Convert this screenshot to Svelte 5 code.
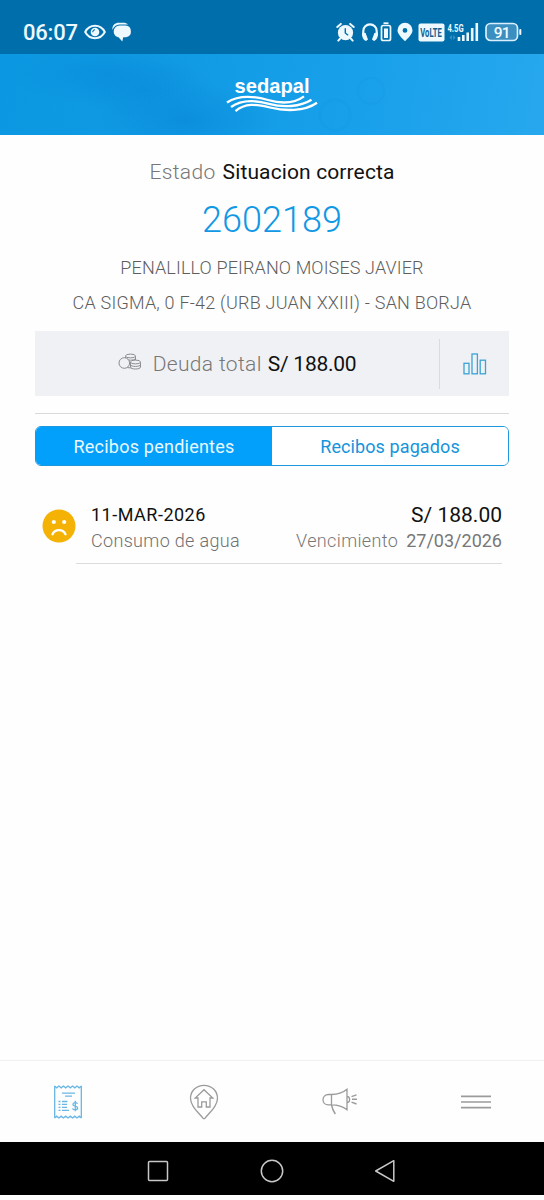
<script lang="ts">
  let tab = $state('pendientes');
</script>

<div class="screen">
  <div class="status">
    <span class="clock">06:07</span>
    <svg class="eye" width="22" height="16" viewBox="0 0 22 16">
      <path d="M1.2 8C5.5-.2 16.5-.2 20.8 8C16.5 16.2 5.500 16.2 1.200 8Z" fill="none" stroke="#eef9ff" stroke-width="2" />
      <circle cx="11" cy="8" r="4.300" fill="#eef9ff" />
      <path d="M8.800 8.300A2.300 2.300 0 0 1 11 5.700" fill="none" stroke="#006eab" stroke-width="1.100" />
    </svg>
    <svg class="bubble" width="20" height="20" viewBox="0 0 20 20">
      <path d="M.4 8C0 3.200 3 .8 7 .8h4c2.300 0 4 .6 5 1.800H7.500C4 2.600 2 4.700.4 8Z" fill="#eef9ff" />
      <path d="M7.500 3.600h6a5.900 5.900 0 0 1 .5 11.700h-2.800L10.300 19.500 6.500 15.300C3.500 15 1.700 12 1.700 9.500A5.900 5.900 0 0 1 7.500 3.600Z" fill="#eef9ff" />
    </svg>
    <span class="grow"></span>
    <svg class="alarm" width="19" height="20" viewBox="0 0 19 20">
      <circle cx="9.500" cy="10.700" r="7.600" fill="#eef9ff" />
      <path d="M1.300 5 4.800 1.900M17.700 5 14.200 1.900M4 16.800 2.300 18.600M15 16.800l1.700 1.800" stroke="#eef9ff" stroke-width="2" stroke-linecap="round" />
      <path d="M9.300 6.300v4.700l2.800 2.300" fill="none" stroke="#006eab" stroke-width="1.400" />
    </svg>
    <svg class="head" width="18" height="20" viewBox="0 0 18 20">
      <path d="M2.300 14V9a6.700 6.700 0 0 1 13.400 0v5" fill="none" stroke="#eef9ff" stroke-width="2.200" />
      <path d="M1 10.500l3.600.5 2.400 6.500-2 1.400C2 18 1 15 1 10.500ZM17 10.500l-3.600.5-2.400 6.500 2 1.400c3-.9 4-3.900 4-8.400Z" fill="#eef9ff" />
    </svg>
    <svg class="cell" width="12" height="20" viewBox="0 0 12 20">
      <rect x="1.500" y="3.500" width="9" height="15" rx="1.800" fill="none" stroke="#eef9ff" stroke-width="1.700" />
      <path d="M3.500 1.200h5" stroke="#eef9ff" stroke-width="1.700" />
      <rect x="4" y="6.500" width="4" height="9.500" fill="#eef9ff" />
    </svg>
    <svg class="pin" width="16" height="20" viewBox="0 0 16 20">
      <path fill-rule="evenodd" d="M8 .7a7.500 7.500 0 0 1 7.500 7.600C15.500 12.300 11 16 8 19.300 5 16 .5 12.300.5 8.300A7.500 7.500 0 0 1 8 .7Zm0 5.300a2.400 2.400 0 1 0 0 4.800 2.400 2.400 0 0 0 0-4.800Z" fill="#eef9ff" />
    </svg>
    <svg class="volte" width="27" height="19" viewBox="0 0 27 19">
      <rect x=".5" y=".5" width="26" height="18" rx="2" fill="#eef9ff" />
      <text transform="translate(2.300 14) scale(.61 1)" font-size="12.500" font-weight="700" fill="#12608d">VoLTE</text>
    </svg>
    <svg class="signal" width="33" height="20" viewBox="0 0 33 20">
      <text transform="translate(.5 9.500) scale(.66 1)" font-size="11.500" font-weight="700" fill="#eef9ff">4.5G</text>
      <path d="M2.500 15.500l2.300-2.500v5zM8.500 15.500l-2.300-2.500v5z" fill="#3a93c4" />
      <path d="M12 19v-4M16.300 19v-6M20.700 19V10.500M25.200 19V6M29.800 19V1" stroke="#eef9ff" stroke-width="2.600" />
    </svg>
    <svg class="batt" width="38" height="20" viewBox="0 0 38 20">
      <rect x="1" y="1.500" width="31.500" height="17" rx="4.500" fill="#3a8fc0" stroke="#d9f0fc" stroke-width="1.700" />
      <rect x="34.300" y="7" width="2" height="6" rx="1" fill="#eef9ff" />
      <text x="8.700" y="15.700" font-size="15.500" letter-spacing="-.8" font-weight="500" fill="#f2fbff">91</text>
    </svg>
  </div>

  <header>
    <svg width="94" height="42" viewBox="0 0 94 42">
      <text x="9.500" y="20.800" textLength="75" lengthAdjust="spacingAndGlyphs" font-family="Liberation Sans, Arial, sans-serif" font-size="20.500" font-weight="700" fill="#fff">sedapal</text>
      <g fill="none" stroke="#fff" stroke-width="2.300">
        <path d="M2 30.500C14 22.500 29 24 43 28S70 31 79 24.300" />
        <path d="M6 35C17 27 30 28 44 31.900S75 35 86.500 27.700" />
        <path d="M10.500 39.200C20 31 31 32 45 35.500S79 40 92 30.800" />
      </g>
    </svg>
  </header>

  <main>
    <div class="state"><span class="light t-estado">Estado</span><span class="t-situacion">Situacion correcta</span></div>
    <div class="number">2602189</div>
    <div class="info name">PENALILLO PEIRANO MOISES JAVIER</div>
    <div class="info addr">CA SIGMA, 0 F-42 (URB JUAN XXIII) - SAN BORJA</div>

    <section class="debt">
      <div class="debt-main">
        <svg width="24" height="18" viewBox="0 0 24 18" fill="#f0f1f5" stroke="#8b8d90" stroke-width="1">
          <path d="M7.500 3.200v10.500c2 1.600 8 1.600 10 0V3.200" />
          <ellipse cx="12.500" cy="3" rx="5" ry="1.900" />
          <path d="M7.500 6c2 1.600 8 1.600 10 0" fill="none" />
          <circle cx="6.300" cy="10" r="5.300" />
          <path d="M12.500 9v5c0 2.700 10 2.700 10 0V9" />
          <ellipse cx="17.500" cy="9" rx="5" ry="1.900" />
          <path d="M12.500 11.500c0 2.600 10 2.600 10 0" fill="none" />
        </svg>
        <span class="light t-deuda">Deuda total</span>
        <span class="t-monto">S/ 188.00</span>
      </div>
      <div class="debt-chart">
        <svg width="24" height="22" viewBox="0 0 24 22" fill="none" stroke="#3ba3d6" stroke-width="1.300">
          <rect x="1" y="10.300" width="5" height="10.500" />
          <rect x="9" y="1" width="5.400" height="19.800" />
          <rect x="17.200" y="7.200" width="5.300" height="13.600" />
        </svg>
      </div>
    </section>

    <div class="rule"></div>

    <div class="tabs">
      <button class:active={tab === 'pendientes'} onclick={() => (tab = 'pendientes')}>Recibos pendientes</button>
      <button class:active={tab === 'pagados'} onclick={() => (tab = 'pagados')}>Recibos pagados</button>
    </div>

    <article class="bill">
      <svg width="34" height="34" viewBox="0 0 34 34">
        <circle cx="17" cy="17" r="16.500" fill="#f3b204" />
        <circle cx="11.800" cy="13" r="2.100" fill="#fff" />
        <circle cx="22.200" cy="13" r="2.100" fill="#fff" />
        <path d="M10.500 25.300C12.700 19.600 21.300 19.600 23.500 25.300" fill="none" stroke="#fff" stroke-width="2.300" stroke-linecap="round" />
      </svg>
      <div class="lines">
        <div class="line"><span class="t-fecha">11-MAR-2026</span><span class="t-total">S/ 188.00</span></div>
        <div class="line sub">
          <span class="t-consumo">Consumo de agua</span>
          <span class="venc"><span class="light t-venc">Vencimiento</span><span class="t-vfecha">27/03/2026</span></span>
        </div>
      </div>
    </article>
    <div class="bill-rule"></div>
  </main>

  <nav class="bottom">
    <div>
      <svg width="30" height="36" viewBox="0 0 30 36" fill="none" stroke="#68b7e4" stroke-width="1.300">
        <path d="M1.700 2v32M28.300 2v32" />
        <path d="M1.500 2l2.200 1.800L5.900 2l2.300 1.800L10.400 2l2.300 1.800L15 2l2.300 1.800L19.500 2l2.300 1.800L24 2l2.200 1.800L28.500 2M1.500 34l2.200-1.800L5.900 34l2.300-1.800L10.400 34l2.300-1.800L15 34l2.300-1.800L19.500 34l2.300-1.800L24 34l2.200-1.800L28.500 34" />
        <path d="M9 9.200h13M12 12.200h7M5.500 17.500h2M9 17.500h5.500M5.500 20.300h2M9 20.300h5M5.500 23.300h2M9 23.300h5M5.500 26.300h2M9 26.300h7" />
        <path d="M24.500 19.700c-.6-1.600-4.600-1.600-4.600.7 0 2.400 4.800 1.200 4.800 3.700 0 2.300-4.600 2.300-5.200.3M22.300 16.800v10.400" />
      </svg>
    </div>
    <div>
      <svg width="30" height="36" viewBox="0 0 30 36" fill="none" stroke="#9b9b9b" stroke-width="1.300">
        <path d="M15 1.300C7.400 1.300 1.500 7 1.500 14.300 1.500 21.500 8 27 14 34.200q1 1 2 0C22 27 28.500 21.500 28.500 14.300 28.500 7 22.600 1.300 15 1.300Z" />
        <path d="M9 23V14H6.200L15 5.700 23.800 14H21v9h-3.700v-5.200h-4.600V23Z" />
      </svg>
    </div>
    <div>
      <svg width="38" height="30" viewBox="0 0 38 30" fill="none" stroke="#9b9b9b" stroke-width="1.300">
        <path d="M10.500 7.500H7.500C.2 7.500.2 17.800 7.500 17.800h3ZM10.500 7.500C16 7.500 21 6.500 26 2.300V22.700C21 18.700 16 17.800 10.500 17.800M26 9.300c3.500 0 3.500 6.300 0 6.300" />
        <path d="M10.500 17.800Q11.500 23 14.300 27M30.500 9.600l5-1.700M31 12.300h5M30.500 15.100l5 1.900" stroke-width="1.500" />
      </svg>
    </div>
    <div>
      <svg width="30" height="16" viewBox="0 0 30 16" stroke="#9b9b9b" stroke-width="1.700">
        <path d="M0 2.300h30M0 8h30M0 13.700h30" />
      </svg>
    </div>
  </nav>

  <div class="system">
    <svg width="22" height="22" viewBox="0 0 22 22"><rect x="1.500" y="1.500" width="19" height="19" rx="1" /></svg>
    <svg width="24" height="24" viewBox="0 0 24 24"><circle cx="12" cy="12" r="10.700" /></svg>
    <svg width="22" height="24" viewBox="0 0 22 24"><path d="M19.800 1.700v20.600L1.700 12Z" stroke-linejoin="round" /></svg>
  </div>
</div>

<style>
  :global(body) { background: #fdfdfd; }
  .screen {
    width: 544px; height: 1200px; box-sizing: border-box; padding-bottom: 5px;
    display: flex; flex-direction: column; overflow: hidden;
    font-family: Roboto, "Open Sans", sans-serif; color: #111; background: #fefefe;
    white-space: nowrap;
  }
  svg { display: block; flex: none; }
  .light { font-weight: 300; color: #777; }

  .status {
    height: 54px; flex: none; box-sizing: border-box; padding: 10px 21px 0 23px;
    display: flex; align-items: center; background: #006eab;
  }
  .clock { font-size: 22px; font-weight: 500; letter-spacing: -0.2px; color: #eef9ff; width: 61px; }
  .eye { margin-right: 6px; }
  .grow { flex: 1; }
  .alarm { margin-right: 6px; }
  .head { margin-right: 1px; }
  .cell { margin-right: 5px; }
  .pin { margin-right: 5px; }
  .volte { margin-right: 2px; }
  .signal { margin-right: 5px; }

  header {
    height: 81px; flex: none; box-sizing: border-box; padding-top: 18px;
    display: flex; justify-content: center; align-items: flex-start;
    background:
      radial-gradient(circle at 371px 37px, transparent 11px, #1192dc38 13px, transparent 15px),
      radial-gradient(circle at 335px 61px, transparent 13px, #1192dc38 15px, transparent 18px),
      radial-gradient(ellipse 90px 38px at 185px 66px, #0787d799, transparent),
      radial-gradient(ellipse 95px 30px at 105px 20px, #0788d777, transparent),
      radial-gradient(ellipse 70px 30px at 145px 36px, #0788d777, transparent),
      linear-gradient(100deg, #0b97e1 0%, #129be5 35%, #18a0ea 65%, #27a8ee 100%);
  }

  main { flex: 1; padding: 20px 35px 0; display: flex; flex-direction: column; }
  .state { height: 34px; display: flex; justify-content: center; align-items: center; gap: 7px; font-size: 21px; }
  .t-estado { letter-spacing: 0.35px; }
  .t-situacion { letter-spacing: 0.12px; }
  .number { height: 60px; line-height: 63px; text-align: center; font-size: 36px; font-weight: 300; color: #1198e4; }
  .info { height: 35px; line-height: 37px; text-align: center; font-size: 18px; font-weight: 300; color: #5e5e5e; letter-spacing: 0.13px; }
  .addr { height: 34px; letter-spacing: 0.21px; }

  .debt { margin-top: 13px; height: 65px; display: flex; align-items: center; background: #f0f1f5; }
  .debt-main { width: 404px; display: flex; align-items: center; justify-content: center; font-size: 21px; }
  .debt-main svg { margin: -4px 11px 0 0; }
  .t-deuda { margin-right: 6px; letter-spacing: 0.35px; }
  .t-monto { letter-spacing: -0.25px; }
  .debt-chart { flex: 1; height: 50px; border-left: 1px solid #d9dbe0; display: flex; align-items: center; justify-content: center; }
  .rule { margin-top: 17px; height: 1px; background: #d8dadd; }

  .tabs {
    margin-top: 12px; height: 40px; box-sizing: border-box; display: flex;
    border: 1.500px solid #1c98dc; border-radius: 6px; overflow: hidden;
  }
  button { flex: 1; border: 0; padding: 0; background: #fff; font: 400 18px Roboto, sans-serif; color: #1594dc; letter-spacing: 0.1px; }
  button.active { background: #02a0fb; color: #e9f8ff; letter-spacing: 0.23px; }

  .bill { margin-top: 36px; display: flex; align-items: center; padding: 0 7px; gap: 15px; height: 51px; }
  .bill svg { margin-top: -3px; }
  .lines { flex: 1; }
  .line { height: 26px; display: flex; justify-content: space-between; align-items: center; font-size: 18px; }
  .sub { color: #777; font-weight: 300; }
  .t-fecha { letter-spacing: 0.5px; }
  .t-total { font-size: 21px; }
  .t-consumo { letter-spacing: 0.33px; color: #707070; }
  .t-venc { letter-spacing: 0.36px; }
  .venc { display: flex; gap: 8px; }
  .t-vfecha { font-weight: 400; }
  .bill-rule { margin: 10px 7px 0 41px; height: 1px; background: #dcdcdc; }

  .bottom { height: 82px; flex: none; box-sizing: border-box; border-top: 1px solid #f0f0f0; display: grid; grid-template-columns: repeat(4, 1fr); background: #fefefe; }
  .bottom div { display: flex; align-items: center; justify-content: center; }

  .system { height: 53px; flex: none; box-sizing: border-box; padding: 5px 148px 0 147px; display: flex; align-items: center; justify-content: space-between; background: #000; }
  .system svg { fill: none; stroke: #c8c8c8; stroke-width: 1.500; }
</style>
